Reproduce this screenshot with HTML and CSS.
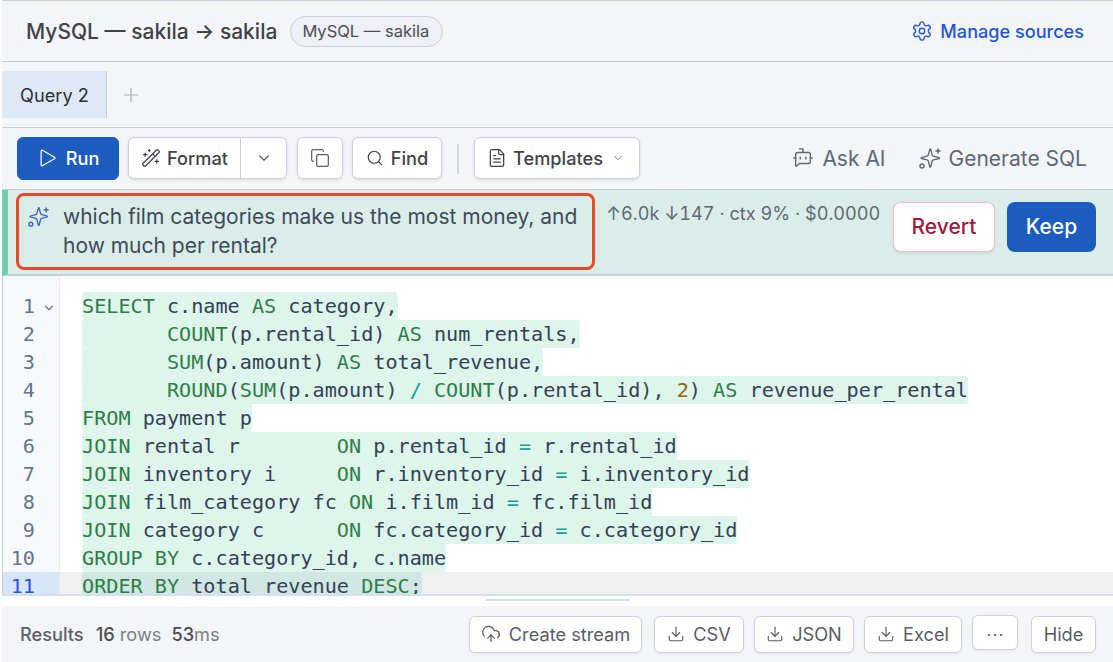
FILE: index.html
```html
<!DOCTYPE html>
<html lang="en">
<head>
<meta charset="utf-8">
<title>Query</title>
<link rel="stylesheet" href="styles.css">
</head>
<body>
<svg class="defs" width="0" height="0" aria-hidden="true">
  <symbol id="i-sparkles" viewBox="0 0 24 24"><path d="M9.94 15.5a2 2 0 0 0-1.44-1.44L2.37 12.48a.5.5 0 0 1 0-.96L8.5 9.94A2 2 0 0 0 9.94 8.5l1.58-6.13a.5.5 0 0 1 .96 0L14.06 8.5a2 2 0 0 0 1.44 1.44l6.13 1.58a.5.5 0 0 1 0 .96L15.5 14.06a2 2 0 0 0-1.44 1.44l-1.58 6.13a.5.5 0 0 1-.96 0z" transform="translate(1.2 1) scale(.92)"/><path d="M20 3v4M22 5h-4"/><circle cx="4" cy="20" r="2"/></symbol>
  <symbol id="i-download" viewBox="0 0 24 24"><path d="M21 15v4a2 2 0 0 1-2 2H5a2 2 0 0 1-2-2v-4"/><path d="m7 10 5 5 5-5"/><path d="M12 15V3"/></symbol>
  <symbol id="i-chev" viewBox="0 0 24 24"><path d="m6 9 6 6 6-6"/></symbol>
</svg>
<div class="app">
  <header class="head">
    <h1 class="title">MySQL — sakila → sakila</h1>
    <span class="pill">MySQL — sakila</span>
    <a class="manage">
      <svg class="ic ic-22" viewBox="0 0 24 24"><path d="M12.22 2h-.44a2 2 0 0 0-2 2v.18a2 2 0 0 1-1 1.730l-.43.25a2 2 0 0 1-2 0l-.15-.08a2 2 0 0 0-2.730.73l-.22.38a2 2 0 0 0 .73 2.730l.15.1a2 2 0 0 1 1 1.720v.51a2 2 0 0 1-1 1.740l-.15.09a2 2 0 0 0-.73 2.730l.22.38a2 2 0 0 0 2.730.73l.15-.08a2 2 0 0 1 2 0l.43.25a2 2 0 0 1 1 1.730V20a2 2 0 0 0 2 2h.44a2 2 0 0 0 2-2v-.18a2 2 0 0 1 1-1.730l.43-.25a2 2 0 0 1 2 0l.15.08a2 2 0 0 0 2.730-.73l.22-.39a2 2 0 0 0-.73-2.730l-.15-.08a2 2 0 0 1-1-1.740v-.5a2 2 0 0 1 1-1.740l.15-.09a2 2 0 0 0 .73-2.730l-.22-.38a2 2 0 0 0-2.730-.73l-.15.08a2 2 0 0 1-2 0l-.43-.25a2 2 0 0 1-1-1.730V4a2 2 0 0 0-2-2z"/><circle cx="12" cy="12" r="3"/></svg>
      Manage sources
    </a>
  </header>

  <nav class="tabs">
    <div class="tab">Query 2</div>
    <svg class="ic tab-add" viewBox="0 0 24 24"><path d="M4 12h16M12 4v16"/></svg>
  </nav>

  <div class="toolbar">
    <button class="btn run">
      <svg class="ic ic-20" viewBox="0 0 24 24"><path d="M5 3.5v17a1 1 0 0 0 1.5.86l14.5-8.5a1 1 0 0 0 0-1.72L6.5 2.640A1 1 0 0 0 5 3.500z"/></svg>
      Run
    </button>
    <div class="btn-group">
      <button class="seg seg-main">
        <svg class="ic ic-20" viewBox="0 0 24 24"><path d="m21.64 3.64-1.28-1.28a1.21 1.21 0 0 0-1.72 0L2.360 18.640a1.21 1.21 0 0 0 0 1.72l1.28 1.28a1.2 1.2 0 0 0 1.72 0L21.640 5.360a1.2 1.2 0 0 0 0-1.72"/><path d="m14 7 3 3"/><path d="M5 6v4M19 14v4M10 2v2M7 8H3M21 16h-4M11 3H9"/></svg>
        Format
      </button>
      <button class="seg seg-caret"><svg class="ic ic-18"><use href="#i-chev"/></svg></button>
    </div>
    <button class="btn btn-copy">
      <svg class="ic ic-20" viewBox="0 0 24 24"><rect x="8" y="8" width="14" height="14" rx="2"/><path d="M4 16c-1.100 0-2-.9-2-2V4c0-1.100.9-2 2-2h10c1.100 0 2 .9 2 2"/></svg>
    </button>
    <button class="btn btn-find">
      <svg class="ic ic-18" viewBox="0 0 24 24"><circle cx="11" cy="11" r="8"/><path d="m21 21-4.300-4.300"/></svg>
      Find
    </button>
    <span class="vsep"></span>
    <button class="btn btn-tpl">
      <svg class="ic ic-20" viewBox="0 0 24 24"><path d="M15 2H6a2 2 0 0 0-2 2v16a2 2 0 0 0 2 2h12a2 2 0 0 0 2-2V7z"/><path d="M14 2v4a2 2 0 0 0 2 2h4M10 9H8M16 13H8M16 17H8"/></svg>
      Templates
      <svg class="ic ic-14"><use href="#i-chev"/></svg>
    </button>
    <span class="grow"></span>
    <a class="ghost ghost-ask">
      <svg class="ic ic-22" viewBox="0 0 24 24"><path d="M12 6V2H8"/><path d="M15 11v2"/><path d="M2 12h2"/><path d="M20 12h2"/><path d="M20 16a2 2 0 0 1-2 2H8.830a2 2 0 0 0-1.410.59l-2.200 2.200A.71.71 0 0 1 4 20.290V8a2 2 0 0 1 2-2h12a2 2 0 0 1 2 2z"/><path d="M9 11v2"/></svg>
      Ask AI
    </a>
    <a class="ghost ghost-gen">
      <svg class="ic gen-ic"><use href="#i-sparkles"/></svg>
      Generate SQL
    </a>
  </div>

  <section class="banner">
    <div class="prompt">
      <svg class="ic prompt-ic"><use href="#i-sparkles"/></svg>
      <p class="prompt-text">which film categories make us the most money, and how much per rental?</p>
    </div>
    <div class="stats">↑6.0k ↓147 · ctx 9% · $0.0000</div>
    <div class="decide">
      <button class="revert">Revert</button>
      <button class="keep">Keep</button>
    </div>
  </section>

  <section class="editor">
    <div class="gutter">
      <div class="ln"><span class="num">1</span><svg class="ic fold"><use href="#i-chev"/></svg></div>
      <div class="ln"><span class="num">2</span></div>
      <div class="ln"><span class="num">3</span></div>
      <div class="ln"><span class="num">4</span></div>
      <div class="ln"><span class="num">5</span></div>
      <div class="ln"><span class="num">6</span></div>
      <div class="ln"><span class="num">7</span></div>
      <div class="ln"><span class="num">8</span></div>
      <div class="ln"><span class="num">9</span></div>
      <div class="ln"><span class="num">10</span></div>
      <div class="ln ln-active"><span class="num">11</span></div>
    </div>
    <div class="code">
      <div class="line"><span class="hl"><b>SELECT</b> c.name <b>AS</b> category,</span></div>
      <div class="line"><span class="hl">       <b>COUNT</b>(p.rental_id) <b>AS</b> num_rentals,</span></div>
      <div class="line"><span class="hl">       <b>SUM</b>(p.amount) <b>AS</b> total_revenue,</span></div>
      <div class="line"><span class="hl">       <b>ROUND</b>(<b>SUM</b>(p.amount) <i>/</i> <b>COUNT</b>(p.rental_id), <u>2</u>) <b>AS</b> revenue_per_rental</span></div>
      <div class="line"><span class="hl"><b>FROM</b> payment p</span></div>
      <div class="line"><span class="hl"><b>JOIN</b> rental r        <b>ON</b> p.rental_id <i>=</i> r.rental_id</span></div>
      <div class="line"><span class="hl"><b>JOIN</b> inventory i     <b>ON</b> r.inventory_id <i>=</i> i.inventory_id</span></div>
      <div class="line"><span class="hl"><b>JOIN</b> film_category fc <b>ON</b> i.film_id <i>=</i> fc.film_id</span></div>
      <div class="line"><span class="hl"><b>JOIN</b> category c      <b>ON</b> fc.category_id <i>=</i> c.category_id</span></div>
      <div class="line"><span class="hl"><b>GROUP BY</b> c.category_id, c.name</span></div>
      <div class="line line-active"><span class="hl hl-active"><b>ORDER BY</b> total_revenue <b>DESC</b>;</span></div>
    </div>
  </section>

  <div class="scrollstrip"><span class="thumb"></span></div>

  <footer class="results">
    <span class="r-label">Results</span>
    <span class="r-meta"><strong>16</strong> rows</span>
    <span class="r-meta"><strong>53</strong>ms</span>
    <span class="grow"></span>
    <button class="fbtn fbtn-stream">
      <svg class="ic ic-20" viewBox="0 0 24 24"><path d="M12 13v8"/><path d="M4 14.900A7 7 0 1 1 15.710 8h1.790a4.500 4.500 0 0 1 2.500 8.240"/><path d="m8 17 4-4 4 4"/></svg>
      Create stream
    </button>
    <button class="fbtn fbtn-csv"><svg class="ic ic-18"><use href="#i-download"/></svg>CSV</button>
    <button class="fbtn fbtn-json"><svg class="ic ic-18"><use href="#i-download"/></svg>JSON</button>
    <button class="fbtn fbtn-xls"><svg class="ic ic-18"><use href="#i-download"/></svg>Excel</button>
    <button class="fbtn fbtn-more">⋯</button>
    <button class="fbtn fbtn-hide">Hide</button>
  </footer>
</div>
</body>
</html>
```
FILE: styles.css
```css
* { box-sizing: border-box; }
html, body { margin: 0; height: 100%; background: #fff; overflow: hidden; }
body { font-family: Inter, "Liberation Sans", sans-serif; color: #3f4348; }
.defs { position: absolute; }
button { font: inherit; color: inherit; margin: 0; cursor: pointer; }
.ic { fill: none; stroke: currentColor; stroke-width: 1.5; stroke-linecap: round; stroke-linejoin: round; flex: none; display: block; }
.ic-14 { width: 14px; height: 14px; }
.ic-18 { width: 18px; height: 18px; }
.ic-20 { width: 20px; height: 20px; }
.ic-22 { width: 22px; height: 22px; }
.gen-ic { width: 24px; height: 24px; }
.grow { flex: 1; }

.app { margin-left: 2px; height: 662px; display: flex; flex-direction: column; background: #f4f5f8; border-top: 1px solid #c6d0dd; }

.head { height: 61px; flex: none; display: flex; align-items: center; padding: 0 29px 0 24px; border-bottom: 1px solid #c6ccd8; }
.title { margin: 0; font-size: 21px; font-weight: 500; color: #3f4348; }
.pill { margin-left: 13px; height: 31px; padding: 0 13px 0 11px; display: flex; align-items: center; font-size: 16.5px; color: #4a4e54; background: #eef0f5; border: 1px solid #c9cfda; border-radius: 16px; }
.manage { margin-left: auto; display: flex; align-items: center; gap: 7px; font-size: 18.1px; font-weight: 500; color: #2257d6; }

.tabs { height: 66px; flex: none; display: flex; align-items: center; border-bottom: 1px solid #c6ccd8; }
.tab { width: 105px; height: 47px; padding-left: 18px; display: flex; align-items: center; font-size: 18.2px; color: #2a2f36; background: #dfe8f7; border-right: 1px solid #c6d0dd; }
.tab-add { width: 20px; height: 20px; margin-left: 14px; color: #a9aeb6; stroke-width: 1.4; }

.toolbar { height: 62px; flex: none; display: flex; align-items: flex-start; padding: 8px 26px 0 15px; border-bottom: 1px solid #c6ccd8; font-size: 18.2px; }
.btn { height: 42px; margin-top: 1px; display: flex; align-items: center; justify-content: center; background: #fff; border: 1px solid #ccd3dc; border-radius: 6px; box-shadow: 0 1px 3px rgba(40, 50, 70, .14); font-weight: 500; padding: 0; }
.run { width: 102px; height: 43px; margin-right: 9px; padding-bottom: 1px; gap: 9px; color: #fff; background: #1b5cbe; border-color: #1b5cbe; box-shadow: none; }
.btn-group { width: 159px; height: 42px; margin-top: 1px; display: flex; background: #fff; border: 1px solid #ccd3dc; border-radius: 6px; box-shadow: 0 1px 3px rgba(40, 50, 70, .14); }
.seg { border: 0; background: none; padding: 0; display: flex; align-items: center; justify-content: center; font-weight: 500; }
.seg-main { width: 112px; gap: 6px; border-right: 1px solid #ccd3dc; }
.seg-caret { flex: 1; color: #5b6068; }
.btn-copy { width: 46px; margin-left: 10px; color: #5b6068; }
.btn-find { width: 90px; margin-left: 9px; gap: 7px; }
.vsep { width: 2px; height: 30px; margin: 8px 15px 0; background: #d3d7de; }
.btn-tpl { width: 166px; gap: 6px; padding-right: 2px; }
.btn-tpl .ic-14 { color: #62676f; margin-left: 2px; }
.ghost { display: flex; align-items: center; height: 44px; color: #5f6876; font-size: 21px; font-weight: 400; }
.ghost-ask { gap: 8px; }
.ghost-gen { gap: 7px; margin-left: 32px; }

.banner { height: 86px; flex: none; display: flex; align-items: flex-start; padding: 3px 17px 0 8px; background: #dbede8; border-left: 6px solid #6fcfa8; border-bottom: 2px solid #c2d0d8; }
.prompt { width: 579px; height: 77px; display: flex; padding: 6px 14px 0 8px; border: 3px solid #e8492a; border-radius: 8px; flex: none; }
.prompt-ic { width: 23px; height: 23px; margin-top: 3px; color: #3f63c6; margin-right: 13px; }
.prompt-text { margin: 0; font-size: 21px; line-height: 29px; color: #3d4a5c; }
.stats { margin-left: 11px; margin-top: 10px; font-size: 18.13px; line-height: 20px; color: #5f6876; white-space: nowrap; font-variant-numeric: tabular-nums; }
.decide { margin-left: auto; margin-top: 9px; display: flex; gap: 12px; }
.revert, .keep { height: 50px; border-radius: 8px; font-size: 21px; font-weight: 500; padding: 0 0 2px; }
.revert { width: 102px; color: #a3173f; background: #fff; border: 1px solid #f7b9c9; box-shadow: 0 1px 3px rgba(40, 50, 70, .12); }
.keep { width: 89px; color: #fff; background: #1b5cbe; border: 0; }

.editor { height: 320px; flex: none; display: flex; overflow: hidden; background: #fff; border-left: 1px solid #c6cfe0; border-bottom: 2px solid #d4dff2; font-family: "DejaVu Sans Mono", monospace; font-size: 20.16px; line-height: 28px; }
.gutter { width: 57px; flex: none; padding-top: 16px; color: #64748b; background: #f8f9fc; border-right: 1px solid #e6e9ef; }
.ln { height: 28px; display: flex; align-items: center; }
.num { width: 32px; text-align: right; }
.ln-active { color: #2257d6; background: #d7e5f9; }
.fold { width: 14px; height: 14px; margin: 3px 0 0 7px; color: #6b7280; stroke-width: 2; }
.code { flex: 1; min-width: 0; padding-top: 16px; color: #334155; }
.line { height: 28px; padding-left: 22px; }
.line-active { background: #efefef; }
.hl { display: inline-block; height: 28px; white-space: pre; background: #def5ec; border-radius: 3px; vertical-align: top; }
.hl-active { background: #d0e8e1; }
.hl b { font-weight: 400; color: #2f7d46; }
.hl i { font-style: normal; color: #1b9c97; }
.hl u { text-decoration: none; color: #8a6a12; }

.scrollstrip { height: 10px; flex: none; background: #fff; margin-left: -2px; padding: 3px 0 0 486px; }
.thumb { display: block; width: 144px; height: 2px; background: #d0ddf6; }

.results { flex: 1; display: flex; align-items: center; padding: 0 17px 0 18px; background: #f4f5f8; font-size: 18.2px; color: #7a7f87; }
.r-label { font-weight: 500; color: #5b6068; margin-right: 12px; }
.r-meta { margin-right: 10px; }
.r-meta strong { font-weight: 500; color: #4a4e54; }
.fbtn { height: 37px; display: flex; align-items: center; justify-content: center; gap: 8px; padding: 0; margin-left: 10px; font-size: 18.2px; color: #585d64; background: #fff; border: 1px solid #ccd3dc; border-radius: 6px; box-shadow: 0 1px 2px rgba(40, 50, 70, .08); }
.fbtn-stream { width: 173px; margin-left: 12px; }
.fbtn-csv { width: 90px; margin-left: 12px; }
.fbtn-json { width: 100px; }
.fbtn-xls { width: 98px; }
.fbtn-more { width: 46px; height: 35px; margin-top: -3px; }
.fbtn-hide { width: 65px; margin-left: 13px; }
```
